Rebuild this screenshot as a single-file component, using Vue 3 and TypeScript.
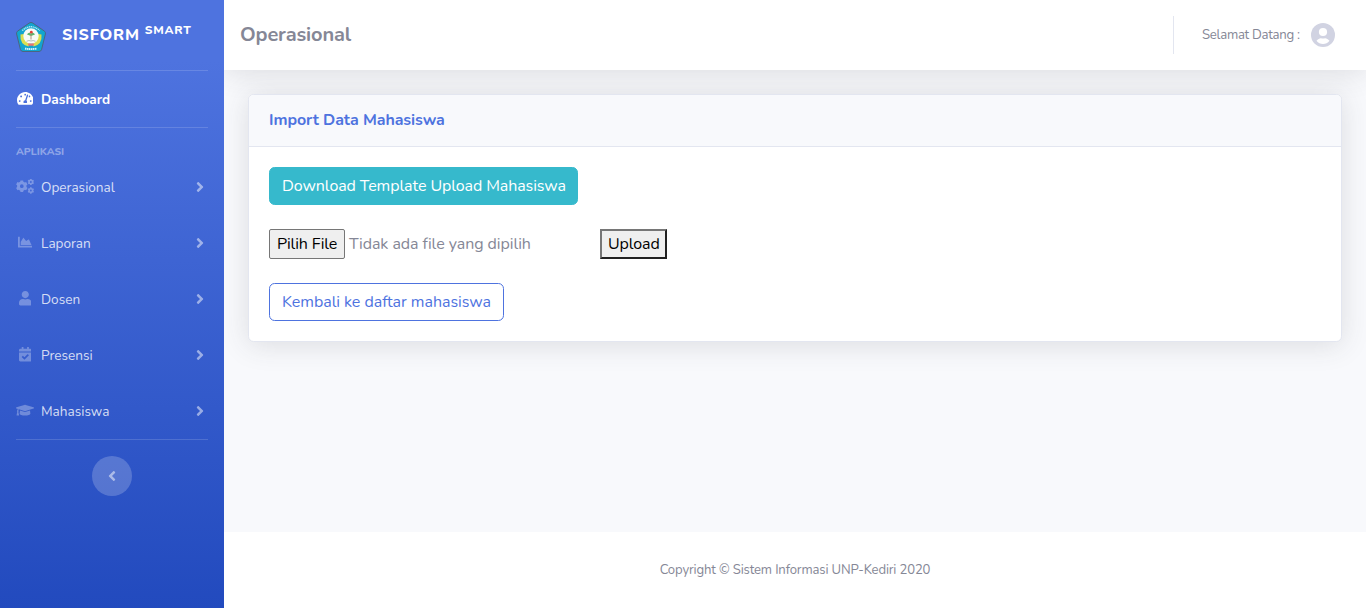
<script setup lang="ts">
interface Icon {
  w: number
  h: number
  d: string
}

/** Outline of a toothed wheel with a round hole. */
function gear(cx: number, cy: number, r: number, depth: number, hole: number, teeth: number): string {
  const pts: string[] = []
  const step = (Math.PI * 2) / teeth
  const at = (rad: number, a: number) => `${(cx + rad * Math.cos(a)).toFixed(1)} ${(cy + rad * Math.sin(a)).toFixed(1)}`
  for (let i = 0; i < teeth; i++) {
    const a = i * step + Math.PI / 2
    pts.push(at(r - depth, a - step * 0.32), at(r, a - step * 0.22), at(r, a + step * 0.22), at(r - depth, a + step * 0.32))
  }
  return `M${pts.join('L')}ZM${cx - hole} ${cy}a${hole} ${hole} 0 1 0 ${hole * 2} 0a${hole} ${hole} 0 1 0 ${-hole * 2} 0Z`
}

const icons: Record<string, Icon> = {
  gauge: {
    w: 576,
    h: 512,
    d: 'M288 32C128.94 32 0 160.94 0 320c0 52.8 14.25 102.26 39.06 144.8 5.61 9.62 16.3 15.2 27.44 15.2h443c11.14 0 21.83-5.58 27.44-15.2C561.75 422.26 576 372.8 576 320c0-159.06-128.94-288-288-288zm0 64c14.71 0 26.58 10.13 30.32 23.65-1.11 2.26-2.64 4.23-3.45 6.67l-9.22 27.67c-5.13 3.49-10.97 6.01-17.64 6.01-17.67 0-32-14.33-32-32S270.33 96 288 96zM96 384c-17.67 0-32-14.33-32-32s14.33-32 32-32 32 14.33 32 32-14.33 32-32 32zm48-160c-17.67 0-32-14.33-32-32s14.33-32 32-32 32 14.33 32 32-14.33 32-32 32zm246.77-72.41l-61.33 184C343.13 347.33 352 364.54 352 384c0 11.72-3.38 22.55-8.88 32H232.88c-5.5-9.45-8.88-20.28-8.88-32 0-33.94 26.5-61.43 59.9-63.59l61.34-184.01c4.17-12.56 17.73-19.45 30.36-15.17 12.57 4.19 19.35 17.79 15.17 30.36zm14.66 57.2l15.52-46.55c3.47-1.29 7.13-2.23 11.05-2.23 17.67 0 32 14.33 32 32s-14.33 32-32 32c-11.38-.01-20.89-6.28-26.57-15.22zM480 384c-17.67 0-32-14.33-32-32s14.33-32 32-32 32 14.33 32 32-14.33 32-32 32z',
  },
  gears: {
    w: 640,
    h: 512,
    d: gear(206, 256, 212, 42, 66, 6) + gear(528, 104, 116, 24, 34, 6) + gear(528, 408, 116, 24, 34, 6),
  },
  chart: {
    w: 512,
    h: 512,
    d: 'M500 384c6.6 0 12 5.4 12 12v40c0 6.6-5.4 12-12 12H12c-6.6 0-12-5.4-12-12V76c0-6.6 5.4-12 12-12h40c6.6 0 12 5.4 12 12v308h436zM372.7 159.5L288 216l-85.3-113.7c-5.1-6.8-15.5-6.3-19.9 1L96 248v104h384l-89.9-187.8c-3.2-6.5-11.4-8.7-17.4-4.7z',
  },
  user: {
    w: 448,
    h: 512,
    d: 'M224 256c70.7 0 128-57.3 128-128S294.7 0 224 0 96 57.3 96 128s57.3 128 128 128zm89.6 32h-16.7c-22.2 10.2-46.9 16-72.9 16s-50.6-5.8-72.9-16h-16.7C60.2 288 0 348.2 0 422.4V464c0 26.5 21.5 48 48 48h352c26.5 0 48-21.5 48-48v-41.6c0-74.2-60.2-134.4-134.4-134.4z',
  },
  calendar: {
    w: 448,
    h: 512,
    d: 'M436 160H12c-6.627 0-12-5.373-12-12v-36c0-26.51 21.49-48 48-48h48V12c0-6.627 5.373-12 12-12h40c6.627 0 12 5.373 12 12v52h128V12c0-6.627 5.373-12 12-12h40c6.627 0 12 5.373 12 12v52h48c26.51 0 48 21.49 48 48v36c0 6.627-5.373 12-12 12zM12 192h424c6.627 0 12 5.373 12 12v260c0 26.51-21.49 48-48 48H48c-26.51 0-48-21.49-48-48V204c0-6.627 5.373-12 12-12zm333.296 95.947l-28.169-28.398c-4.667-4.705-12.265-4.736-16.97-.068L194.12 364.665l-45.98-46.352c-4.667-4.705-12.266-4.736-16.971-.068l-28.397 28.17c-4.705 4.667-4.736 12.265-.068 16.97l82.601 83.269c4.667 4.705 12.265 4.736 16.97.068l142.953-141.805c4.705-4.667 4.736-12.265.068-16.97z',
  },
  cap: {
    w: 640,
    h: 512,
    d: 'M622.34 153.2L343.4 67.5c-15.2-4.67-31.6-4.67-46.79 0L17.66 153.2c-23.54 7.23-23.54 38.36 0 45.59l48.63 14.94c-10.67 13.19-17.23 29.28-17.88 46.9C38.78 266.15 32 276.11 32 288c0 10.78 5.68 19.85 13.86 25.65L20.33 428.53C18.11 438.52 25.71 448 35.94 448h56.11c10.24 0 17.84-9.48 15.62-19.47L82.14 313.65C90.32 307.85 96 298.78 96 288c0-11.57-6.47-21.25-15.66-26.87.76-15.02 8.44-28.3 20.69-36.72L296.6 284.5c9.06 2.78 26.44 6.25 46.79 0l278.95-85.7c23.55-7.24 23.55-38.36 0-45.6zM352.79 315.09c-28.53 8.76-52.84 3.92-65.59 0l-145.02-44.55L128 384c0 35.35 85.96 64 192 64s192-28.65 192-64l-14.18-113.47-145.03 44.56z',
  },
}

const menu = [
  { label: 'Operasional', icon: icons.gears, cls: 'wide' },
  { label: 'Laporan', icon: icons.chart, cls: 'plain' },
  { label: 'Dosen', icon: icons.user, cls: 'plain' },
  { label: 'Presensi', icon: icons.calendar, cls: 'plain' },
  { label: 'Mahasiswa', icon: icons.cap, cls: 'wide' },
]
</script>

<template>
  <div class="wrapper">
    <nav class="sidebar">
      <a class="brand">
        <svg class="logo" viewBox="0 0 30 30">
          <path d="M15 .5Q16 .5 17 1.200L28.500 9.200Q29.800 10.200 29.400 12L25.600 27.400Q25 29.500 23 29.500H7Q5 29.500 4.400 27.400L.6 12Q.2 10.200 1.500 9.200L13 1.200Q14 .5 15 .5Z" fill="#12a5cf" stroke="#4b6680" stroke-width="1" />
          <path d="M6.200 8.600Q15 .8 23.800 8.600" fill="none" stroke="#b9e6f2" stroke-width="1.400" stroke-dasharray="1.300 .6" />
          <path d="M4.500 12.500Q3.500 22.500 12.500 24.500L14 20 8 12Z" fill="#d9de52" />
          <path d="M25.500 12.500Q26.500 22.500 17.500 24.500L16 20 22 12Z" fill="#d9de52" />
          <circle cx="15" cy="14" r="7.700" fill="#f7fbf6" />
          <path d="M11 12.500Q12.500 9.500 15 11.500 17.500 9.500 19 12.500L15 14Z" fill="#5fb56c" />
          <path d="M15 12.500V17.500" stroke="#a88874" stroke-width=".9" />
          <circle cx="15.300" cy="10.200" r="1.400" fill="#e23d38" />
          <path d="M10.500 19.300Q13 18 15 19 17 18 19.500 19.300" fill="none" stroke="#a9b5b4" stroke-width=".9" />
          <path d="M11.800 21.600H18.200L17.500 23.800H12.500Z" fill="#ea7472" />
          <path d="M9 26.500Q15 27.700 21 26.500" fill="none" stroke="#d5f2f9" stroke-width="1.900" stroke-dasharray="1.500 .5" />
        </svg>
        <span class="brand-name">SISFORM</span><span class="brand-sup">SMART</span>
      </a>
      <hr class="divider" />
      <a class="item active">
        <span class="icon"><svg :viewBox="`0 0 ${icons.gauge.w} ${icons.gauge.h}`" class="glyph gauge"><path :d="icons.gauge.d" /></svg></span>
        <span class="label">Dashboard</span>
      </a>
      <hr class="divider" />
      <div class="heading">APLIKASI</div>
      <a v-for="m in menu" :key="m.label" class="item">
        <span class="icon"><svg :viewBox="`0 0 ${m.icon.w} ${m.icon.h}`" class="glyph" :class="m.cls"><path fill-rule="evenodd" :d="m.icon.d" /></svg></span>
        <span class="label">{{ m.label }}</span>
        <svg class="arrow" viewBox="0 0 256 512"><path d="M224.300 273l-136 136c-9.400 9.400-24.600 9.400-33.900 0l-22.600-22.600c-9.400-9.400-9.400-24.600 0-33.900l96.400-96.400-96.400-96.400c-9.400-9.400-9.400-24.600 0-33.900L54.300 103c9.400-9.400 24.600-9.400 33.900 0l136 136c9.500 9.400 9.500 24.600.1 34z" /></svg>
      </a>
      <hr class="divider" />
      <button class="toggle" type="button" aria-label="Toggle sidebar">
        <svg viewBox="0 0 256 512"><path d="M31.700 239l136-136c9.400-9.400 24.600-9.400 33.900 0l22.600 22.600c9.400 9.400 9.400 24.600 0 33.900L127.900 256l96.400 96.400c9.400 9.400 9.400 24.600 0 33.900L201.700 409c-9.400 9.400-24.600 9.400-33.900 0l-136-136c-9.500-9.400-9.500-24.600-.1-34z" /></svg>
      </button>
    </nav>

    <div class="content">
      <header class="topbar">
        <h1>Operasional</h1>
        <div class="account">
          <span class="welcome">Selamat Datang :</span>
          <svg class="avatar" viewBox="0 0 24 24">
            <circle cx="12" cy="12" r="12" fill="#d1d3e2" />
            <circle cx="12" cy="9" r="4.100" fill="#fff" />
            <path d="M5.500 17.800C7 15.800 9 15 10 15.200Q12 15.900 14 15.200C15 15 17 15.800 18.500 17.800Q15.900 21 12 21T5.500 17.800Z" fill="#fff" />
          </svg>
        </div>
      </header>

      <main class="main">
        <section class="card">
          <div class="card-head">Import Data Mahasiswa</div>
          <div class="card-body">
            <a class="btn info">Download Template Upload Mahasiswa</a>
            <div class="form-row">
              <div class="file">
                <button class="choose" type="button">Pilih File</button>
                <span class="chosen">Tidak ada file yang dipilih</span>
              </div>
              <button class="upload" type="button">Upload</button>
            </div>
            <a class="btn outline">Kembali ke daftar mahasiswa</a>
          </div>
        </section>
      </main>

      <footer class="footer">Copyright © Sistem Informasi UNP-Kediri 2020</footer>
    </div>
  </div>
</template>

<style>
body {
  margin: 0;
  overflow: hidden;
}
</style>

<style scoped>
* {
  box-sizing: border-box;
}
.wrapper {
  display: flex;
  height: 608px;
  font-family: Nunito, Lato, "Open Sans", sans-serif;
  font-size: 16px;
  line-height: 24px;
  color: #858796;
  background: #f8f9fc;
}
.sidebar {
  width: 224px;
  flex: none;
  display: flex;
  flex-direction: column;
  background: linear-gradient(180deg, #4e73df 10%, #224abe 100%);
}
.brand {
  height: 70px;
  display: flex;
  align-items: center;
  padding: 0 16px;
  color: #fff;
  font-weight: 800;
}
.logo {
  width: 30px;
  height: 30px;
  margin: 4px 16px 0 0;
}
.brand-name {
  font-size: 16px;
  letter-spacing: 0.8px;
}
.brand-sup {
  font-size: 12px;
  letter-spacing: 0.8px;
  margin: -10px 0 0 5px;
}
.divider {
  width: 192px;
  height: 1px;
  border: 0;
  margin: 0 16px;
  background: rgba(255, 255, 255, 0.15);
  flex: none;
}
.item {
  height: 56px;
  flex: none;
  display: flex;
  align-items: center;
  padding: 0 16px;
  font-size: 13.6px;
  color: rgba(255, 255, 255, 0.8);
  fill: rgba(255, 255, 255, 0.3);
}
.item.active {
  color: #fff;
  fill: #fff;
  font-weight: 700;
}
.label {
  padding-top: 1px;
}
.icon {
  width: 18px;
  margin-right: 7px;
  display: flex;
  justify-content: center;
}
.glyph {
  height: 14.4px;
  flex: none;
  margin-top: -1px;
}
.glyph.gauge {
  width: 16.5px;
  height: 14.7px;
}
.glyph.wide {
  width: 18px;
}
.arrow {
  width: 8px;
  height: 16px;
  margin-left: auto;
  margin-right: 4px;
  fill: rgba(255, 255, 255, 0.5);
}
.heading {
  height: 31px;
  padding: 12px 16px 0;
  font-size: 10.4px;
  font-weight: 800;
  color: rgba(255, 255, 255, 0.4);
}
.toggle {
  width: 40px;
  height: 40px;
  border: 0;
  padding: 0;
  border-radius: 50%;
  margin: 16px auto 0;
  display: flex;
  align-items: center;
  justify-content: center;
  background: rgba(255, 255, 255, 0.2);
  fill: rgba(255, 255, 255, 0.5);
}
.toggle svg {
  width: 8px;
  height: 16px;
}
.content {
  flex: 1;
  min-width: 0;
  display: flex;
  flex-direction: column;
  overflow: hidden;
}
.topbar {
  height: 70px;
  flex: none;
  display: flex;
  align-items: center;
  justify-content: space-between;
  padding: 0 31px 0 16px;
  background: #fff;
  box-shadow: 0 2.4px 28px 0 rgba(58, 59, 69, 0.15);
}
h1 {
  margin: 0;
  font-size: 20px;
  font-weight: 700;
  letter-spacing: -0.15px;
}
.account {
  width: 162px;
  height: 38px;
  display: flex;
  align-items: center;
  justify-content: space-between;
  padding-left: 28px;
  border-left: 1px solid #e3e6f0;
}
.welcome {
  font-size: 13.2px;
  letter-spacing: -0.28px;
  white-space: nowrap;
}
.avatar {
  width: 24px;
  height: 24px;
  flex: none;
}
.main {
  flex: 1;
  padding: 24px;
}
.card {
  height: 248px;
  background: #fff;
  border: 1px solid #e3e6f0;
  border-radius: 5.6px;
  box-shadow: 0 2.4px 28px 0 rgba(58, 59, 69, 0.15);
}
.card-head {
  height: 52px;
  padding: 13px 20px 0;
  border-bottom: 1px solid #e3e6f0;
  border-radius: 4.6px 4.6px 0 0;
  background: #f8f9fc;
  color: #4e73df;
  font-weight: 700;
  letter-spacing: -0.07px;
}
.card-body {
  padding: 20px;
  display: flex;
  flex-direction: column;
  align-items: flex-start;
  gap: 24px;
}
.btn {
  height: 38px;
  padding: 6px 0 6px 12px;
  border: 1px solid;
  border-radius: 5.6px;
  white-space: nowrap;
}
.info {
  width: 309px;
  color: #fff;
  background: #36b9cc;
  border-color: #36b9cc;
  letter-spacing: -0.09px;
}
.outline {
  width: 235px;
  color: #4e73df;
  border-color: #4e73df;
  letter-spacing: -0.04px;
}
.form-row {
  display: flex;
  height: 30px;
}
.file {
  width: 331px;
  display: flex;
  align-items: center;
}
.choose,
.upload {
  height: 30px;
  font: inherit;
  color: #000;
  background: #efefef;
  white-space: nowrap;
}
.choose {
  width: 76px;
  padding: 1px 0 1px 7px;
  text-align: left;
  border: 1px solid #767676;
  border-radius: 2px;
  letter-spacing: -0.12px;
}
.chosen {
  margin-left: 4px;
  letter-spacing: -0.05px;
}
.upload {
  width: 67px;
  padding: 1px 0 1px 6px;
  text-align: left;
  border: 2px solid;
  border-color: #767676 #212121 #212121 #767676;
  letter-spacing: -0.12px;
}
.footer {
  height: 76px;
  flex: none;
  display: flex;
  align-items: center;
  justify-content: center;
  background: #fff;
  font-size: 13.1px;
  letter-spacing: -0.14px;
}
</style>
